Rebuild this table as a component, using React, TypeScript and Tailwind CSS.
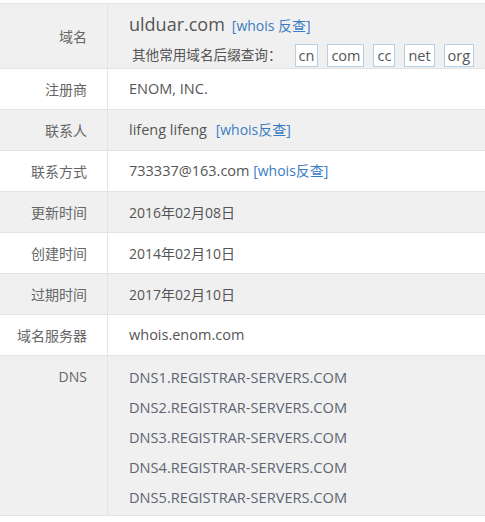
import React from "react";

const font = { fontFamily: '"Open Sans", "Noto Sans CJK SC", sans-serif' };

function Row({
  label,
  bg,
  children,
  h = "h-[41px]",
  labelTop = false,
  top = false,
}: {
  label: string;
  bg: string;
  children: React.ReactNode;
  h?: string;
  labelTop?: boolean;
  top?: boolean;
}) {
  return (
    <div className={`flex ${h} border-b border-[#e3e3e3] ${bg}`}>
      <div
        className={`w-[108px] shrink-0 border-r border-[#e6e6e6] flex justify-end pr-[20px] text-[14px] text-[#666] ${
          labelTop ? "items-start pt-[10px]" : "items-center"
        }`}
      >
        {label}
      </div>
      <div
        className={`flex-1 min-w-0 pl-[21px] flex flex-col text-[14px] text-[#555] ${
          top ? "justify-start" : "justify-center"
        }`}
      >
        {children}
      </div>
    </div>
  );
}

export default function App() {
  const exts = ["cn", "com", "cc", "net", "org"];
  const dns = [1, 2, 3, 4, 5];
  return (
    <div className="w-[485px] h-[522px] bg-white pt-[3px] overflow-hidden" style={font}>
      <div className="border-t border-[#e3e3e3]">
        <Row label="域名" bg="bg-[#f0f0f0]" h="h-[65px]" top>
          <div className="flex items-baseline mt-[7px] h-[26px] whitespace-nowrap">
            <span className="text-[18px] text-[#555] leading-[26px]">ulduar.com</span>
            <span className="ml-[7px] text-[14px] text-[#3a7cc4]">[whois 反查]</span>
          </div>
          <div className="flex items-center mt-[7px] text-[13.6px] text-[#555] whitespace-nowrap">
            <span className="shrink-0 ml-[3px] mr-[13px]">其他常用域名后缀查询：</span>
            <div className="flex shrink-0 gap-[9px]">
              {exts.map((e) => (
                <span
                  key={e}
                  className="h-[23px] px-[3px] flex items-center bg-white border border-[#b5cfe6] text-[14.5px] text-[#555]"
                >
                  {e}
                </span>
              ))}
            </div>
          </div>
        </Row>
        <Row label="注册商" bg="bg-white">
          <span className="text-[14.5px]">ENOM, INC.</span>
        </Row>
        <Row label="联系人" bg="bg-[#f0f0f0]">
          <span className="whitespace-nowrap">
            <span className="text-[14.5px]">lifeng lifeng</span>{" "}
            <span className="ml-[5px] text-[#3a7cc4]">[whois反查]</span>
          </span>
        </Row>
        <Row label="联系方式" bg="bg-white">
          <span className="whitespace-nowrap">
            <span className="text-[14.5px]">733337@163.com</span>{" "}
            <span className="text-[#3a7cc4]">[whois反查]</span>
          </span>
        </Row>
        <Row label="更新时间" bg="bg-[#f0f0f0]">
          <span>2016年02月08日</span>
        </Row>
        <Row label="创建时间" bg="bg-white">
          <span>2014年02月10日</span>
        </Row>
        <Row label="过期时间" bg="bg-[#f0f0f0]">
          <span>2017年02月10日</span>
        </Row>
        <Row label="域名服务器" bg="bg-white">
          <span className="text-[14.5px]">whois.enom.com</span>
        </Row>
        <Row label="DNS" bg="bg-[#f0f0f0]" h="h-[160px]" labelTop top>
          <div className="flex flex-col pt-[6px] text-[14.6px] text-[#5e6470]">
            {dns.map((n) => (
              <div key={n} className="h-[30px] leading-[30px]">
                DNS{n}.REGISTRAR-SERVERS.COM
              </div>
            ))}
          </div>
        </Row>
      </div>
    </div>
  );
}
